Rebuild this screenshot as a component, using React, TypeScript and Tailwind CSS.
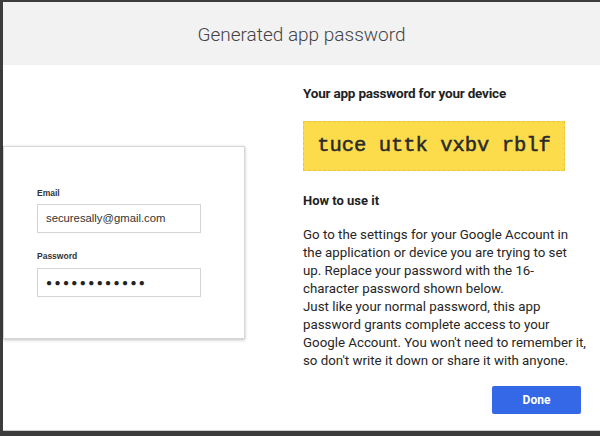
import React from 'react';

const SignInCard: React.FC = () => (
  <div className="w-[242px] h-[193px] bg-white border border-[#d6d6d6] shadow-[0_1px_3px_rgba(0,0,0,0.25)] pl-[33px] pt-[41px] font-['Liberation_Sans',sans-serif]">
    <div className="text-[8.5px] font-bold text-[#333] leading-[11px]">Email</div>
    <div className="mt-[5px] w-[164px] h-[29px] border border-[#d4d4d4] flex items-center px-[8px] text-[11.3px] text-[#333]">
      securesally@gmail.com
    </div>
    <div className="mt-[18px] text-[8.5px] font-bold text-[#333] leading-[11px]">Password</div>
    <div className="mt-[6px] w-[164px] h-[29px] border border-[#d4d4d4] flex items-center px-[8px] text-[10px] tracking-[2.4px] text-[#222]">
      ●●●●●●●●●●●●
    </div>
  </div>
);

const lines = [
  'Go to the settings for your Google Account in',
  'the application or device you are trying to set',
  'up. Replace your password with the 16-',
  'character password shown below.',
  'Just like your normal password, this app',
  'password grants complete access to your',
  "Google Account. You won't need to remember it,",
  "so don't write it down or share it with anyone.",
];

export default function App() {
  return (
    <div className="w-[600px] h-[436px] bg-[#3c3c3c] pl-[3px] pt-[2px] pb-[5px] font-['Roboto',sans-serif]">
      <div className="h-full bg-white flex flex-col border-b border-[#cfcfcf]">
        <div className="h-[63px] bg-[#f2f2f2] flex items-center justify-center pt-[3px] text-[19px] font-light text-[#444]">
          Generated app password
        </div>
        <div className="flex flex-1">
          <div className="w-[300px] pt-[81px]">
            <SignInCard />
          </div>
          <div className="flex-1 pt-[19px] pr-[9px] text-[#222]">
            <h2 className="text-[13.5px] font-bold leading-[18px] tracking-[-0.2px]">Your app password for your device</h2>
            <div className="mt-[19px] w-[262px] h-[50px] bg-[#fddc4c] border border-dashed border-[#e9c640] flex items-center justify-center font-['Liberation_Mono',monospace] text-[20.5px] text-[#2a2a2a] [-webkit-text-stroke:0.5px_#2a2a2a]">
              tuce uttk vxbv rblf
            </div>
            <h3 className="mt-[21px] text-[13px] font-bold leading-[18px]">How to use it</h3>
            <p className="mt-[16px] text-[13.3px] leading-[18px] text-[#262626] whitespace-nowrap">
              {lines.map((l, i) => (
                <React.Fragment key={i}>
                  {l}
                  {i < lines.length - 1 && <br />}
                </React.Fragment>
              ))}
            </p>
            <div className="flex justify-end mt-[16px] pr-[10px]">
              <button className="w-[89px] h-[28px] rounded-[2px] bg-[#3568e6] text-white text-[12px] font-bold">
                Done
              </button>
            </div>
          </div>
        </div>
      </div>
    </div>
  );
}
